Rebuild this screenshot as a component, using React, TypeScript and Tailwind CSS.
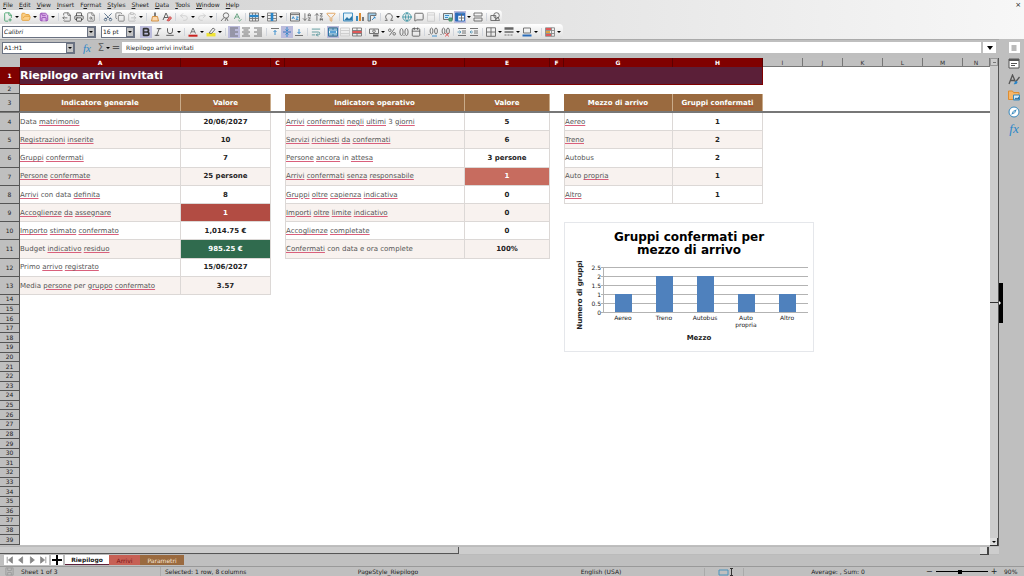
import React from 'react';
import {
  ArrowDownAZ, ArrowUpZA, BarChart3, Bold, Brush, Calendar, ClipboardPaste, Copy, Eraser,
  FileOutput, FilePlus2, FileSearch, FolderOpen, Funnel, Globe, Heading, Image,
  Italic, MessageSquare, Omega, Printer, Redo2, Save, Scissors, Search,
  Shapes, SpellCheck, Underline, Undo2, WrapText,
} from 'lucide-react';

const COLS =
  'grid grid-cols-[20px_161px_90px_14px_180px_85px_14px_109px_90px_repeat(5,40px)_1fr]';

const CORRECT = ['Data', 'con', 'data', 'in', '3', 'Budget', 'Primo', 'Media', 'per', 'Autobus', 'Auto', 'di', 'complete', 'e', 'ora'];

type Tool = { kind: 'icon'; name: string; icon: React.ReactNode; active?: boolean } | { kind: 'more' } | { kind: 'sep' };

const more: Tool = { kind: 'more' };
const sep: Tool = { kind: 'sep' };
const tool = (name: string, icon: React.ReactNode, active = false): Tool => ({ kind: 'icon', name, icon, active });

const Glyph = ({ children }: { children: React.ReactNode }) => (
  <svg viewBox="0 0 10 10" className="size-[10px]" fill="none" stroke="#666" strokeWidth="0.9">
    {children}
  </svg>
);

const lines = (rows: number[][]) => (
  <Glyph>
    {rows.map(([y, x1, x2]) => (
      <path key={y} d={`M${x1} ${y}H${x2}`} />
    ))}
  </Glyph>
);

const standardTools: Tool[] = [
  tool('New', <FilePlus2 size={10} color="#3f9f68" />), more,
  tool('Open', <FolderOpen size={10} color="#e39a2d" fill="#fbd08a" />), more,
  tool('Save', <Save size={10} color="#8d3fae" fill="#dcb4ea" />), more, sep,
  tool('Export as PDF', <FileOutput size={10} color="#666" />),
  tool('Print', <Printer size={10} color="#444" />),
  tool('Print preview', <FileSearch size={10} color="#777" />), sep,
  tool('Cut', <Scissors size={10} color="#4a6480" className="-rotate-90" />),
  tool('Copy', <Copy size={10} color="#777" />),
  tool('Paste', <ClipboardPaste size={10} color="#bbb" />), more, sep,
  tool('Clone formatting', <Glyph><path d="M5 .5v3.500" stroke="#555" strokeWidth="1.500" /><path d="M2.500 4.500h5l1 4.500h-7z" fill="#fbd9b0" stroke="#d08a38" /></Glyph>),
  tool('Clear formatting', <Glyph><path d="M1 8L4 1l3 6M2 5.500h4" stroke="#555" /><path d="M5 8.500l3-4 1.500 1.500-2.500 3z" fill="#e47878" stroke="#cc4b4b" /></Glyph>), sep,
  tool('Undo', <Undo2 size={10} color="#ccc" />), more,
  tool('Redo', <Redo2 size={10} color="#ccc" />), more, sep,
  tool('Find', <Glyph><circle cx="6" cy="3.500" r="2.700" /><path d="M4 5.500L1 9M5 9l1.500-3L8 9" /></Glyph>),
  tool('Spelling', <SpellCheck size={10} color="#5d9c78" />), sep,
  tool('Row', <Glyph><path d="M.5 1h9v8h-9zM.5 6.500h9M3.500 1v8M6.500 1v8" stroke="#777" /><path d="M.5 4h9" stroke="#2b86c9" strokeWidth="2.400" /></Glyph>), more,
  tool('Column', <Glyph><path d="M.5 1h9v8h-9zM.5 3.500h9M.5 6.500h9" stroke="#777" /><path d="M5 1v8" stroke="#2b86c9" strokeWidth="2.600" /></Glyph>), more, sep,
  tool('Sort', <Glyph><path d="M.5 1h9v8h-9z" /><path d="M.5 2.600h9" /><path d="M2 7l1.200-2.400L4.400 7M6 5h2.400L6 7.400h2.400" stroke="#2b86c9" /></Glyph>),
  tool('Sort ascending', <ArrowDownAZ size={10} color="#666" />),
  tool('Sort descending', <ArrowUpZA size={10} color="#666" />),
  tool('AutoFilter', <Funnel size={10} color="#e09a4d" />), sep,
  tool('Image', <Glyph><path d="M.5 1h9v8h-9z" fill="#e4f3fa" stroke="#3788bd" /><path d="M1 8.500l3-3.500 2 2 3-3v4.500z" fill="#2b78a9" stroke="none" /></Glyph>),
  tool('Chart', <Glyph><path d="M2 9V4" stroke="#3788bd" strokeWidth="2" /><path d="M5 9V1" stroke="#dd8d33" strokeWidth="2" /><path d="M8 9V5" stroke="#777" strokeWidth="2" /></Glyph>),
  tool('Pivot table', <Glyph><path d="M1 1h8v2.500H3.500V9H1z" fill="#9fcce8" /><path d="M5 8l3-3M6.500 5H8v1.500" stroke="#2b86c9" /></Glyph>), sep,
  tool('Special character', <Omega size={10} color="#555" />), more,
  tool('Hyperlink', <Globe size={10} color="#3b93a2" />),
  tool('Comment', <MessageSquare size={10} color="#555" />),
  tool('Headers and footers', <Glyph><path d="M1.500 .8h7v8.500h-7zM1.500 3h7" stroke="#ccc" /></Glyph>), sep,
  tool('Define print area', <Glyph><path d="M.5 1.500h9v6h-9z" fill="#cde9f4" /><path d="M2 3.500h4M2 5.500h3" stroke="#2b86c9" /><path d="M6 6h3v3H6z" fill="#5fae80" stroke="#4c8d68" /></Glyph>),
  tool('Freeze rows and columns', <Glyph><path d="M.5 1h9v8h-9z" fill="#fff" stroke="#2b6cb9" /><path d="M.5 2.500h9M2 1v8" stroke="#2b6cb9" strokeWidth="2.500" /><path d="M4 6h5.500M6.500 2v7" /></Glyph>, true), more,
  tool('Split window', <Glyph><path d="M1 1h8v3H1zM1 6h8v3H1z" /></Glyph>), sep,
  tool('Draw functions', <Glyph><circle cx="6.500" cy="3.500" r="2.800" /><path d="M.8 3.500h5v5h-5zM5 8.500L8 5l1.500 3.500z" /></Glyph>),
];

const formatTools: Tool[] = [
  tool('Bold', <Bold size={10} color="#333" strokeWidth={4} />, true),
  tool('Italic', <Italic size={10} color="#444" />),
  tool('Underline', <Underline size={10} color="#444" />), more, sep,
  tool('Font color', <Glyph><path d="M2.500 6.500L5 1l2.500 5.500M3.300 4.800h3.400" /><path d="M.5 8.700h9" stroke="#c9211e" strokeWidth="2" /></Glyph>), more,
  tool('Highlighting', <Glyph><path d="M.5 7.700h9" stroke="#f0e436" strokeWidth="3.500" /><path d="M3 6l4-5 2 1.500L5.500 6.500z" /></Glyph>), more, sep,
  tool('Align left', lines([[1, 1, 9], [3, 1, 6], [5, 1, 9], [7, 1, 6], [9, 1, 9]]), true),
  tool('Align center', lines([[1, 1, 9], [3, 2.5, 7.5], [5, 1, 9], [7, 2.5, 7.5], [9, 1, 9]])),
  tool('Align right', lines([[1, 1, 9], [3, 4, 9], [5, 1, 9], [7, 4, 9], [9, 1, 9]])), sep,
  tool('Align top', <Glyph><path d="M1 1.500h8" /><path d="M5 8V3.500M3.500 5L5 3.500 6.500 5" stroke="#2b86c9" /></Glyph>),
  tool('Center vertically', <Glyph><path d="M1 5h8" stroke="#2b6cb9" /><path d="M5 0v4M3.500 2.500L5 4l1.500-1.500M5 10V6M3.500 7.500L5 6l1.500 1.500" stroke="#2b86c9" /></Glyph>, true),
  tool('Align bottom', <Glyph><path d="M1 8.500h8" /><path d="M5 2v4.500M3.500 5L5 6.500 6.500 5" stroke="#2b86c9" /></Glyph>), sep,
  tool('Wrap text', <WrapText size={10} color="#4b8f94" />), sep,
  tool('Merge and center', <Glyph><path d="M.5 1h9v8h-9z" fill="#e4f3fa" /><path d="M.5 1h9v8h-9zM.5 3h9M.5 7h9M5 1v2M5 7v2" stroke="#2b78a9" /><path d="M2 5h6" stroke="#2b86c9" strokeWidth="1.500" /></Glyph>, true),
  tool('Merge cells', <Glyph><path d="M.5 1h9v8h-9zM.5 3.500h9M.5 6.500h9" stroke="#ccc" /></Glyph>),
  tool('Unmerge cells', <Glyph><path d="M.5 1h9v8h-9zM.5 3.500h9M.5 6.500h9M5 1v8" stroke="#777" /><path d="M.5 5h9" stroke="#df5858" strokeWidth="2" /></Glyph>), sep,
  tool('Currency', <Glyph><path d="M.5 2h9v4.500h-9z" /><circle cx="5" cy="4.200" r="1.300" /><path d="M4 8.500h5.500" strokeWidth="2" /></Glyph>), more,
  tool('Percent', <Glyph><circle cx="2.800" cy="3.200" r="1.300" /><circle cx="7.200" cy="6.800" r="1.300" /><path d="M7.500 1.500l-5 7" /></Glyph>),
  tool('Number', <Glyph><ellipse cx="2.500" cy="5" rx="1.600" ry="3.500" /><ellipse cx="7.500" cy="5" rx="1.600" ry="3.500" /><path d="M5 8v1" /></Glyph>),
  tool('Date', <Calendar size={10} color="#555" />), sep,
  tool('Add decimal', <Glyph><ellipse cx="3.500" cy="4" rx="1.400" ry="3" /><ellipse cx="8" cy="4" rx="1.400" ry="3" /><path d="M1 7v1" /><path d="M4 9h5" stroke="#2b86c9" /></Glyph>),
  tool('Delete decimal', <Glyph><ellipse cx="3.500" cy="4" rx="1.400" ry="3" /><ellipse cx="8" cy="4" rx="1.400" ry="3" /><path d="M1 7v1" /><path d="M5 6l4 3.500M9 6L5 9.500" stroke="#df5858" /></Glyph>), sep,
  tool('Increase indent', <Glyph><path d="M1 1.500h8M5 4h4M5 6h4M1 8.500h8" /><path d="M.5 5h3M2.500 3.500L4 5 2.500 6.500" stroke="#5b9ab9" /></Glyph>),
  tool('Decrease indent', <Glyph><path d="M1 1.500h8M5 4h4M5 6h4M1 8.500h8" /><path d="M1 5h3M2.500 3.500L1 5l1.500 1.500" stroke="#5b9ab9" /></Glyph>), sep,
  tool('Borders', <Glyph><path d="M.5 .8h9v8.500h-9zM5 .8v8.500M.5 5h9" /></Glyph>), more,
  tool('Border style', <Glyph><path d="M.5 1.500h9" strokeWidth="2.500" /><path d="M.5 5h9" strokeWidth="1.500" /><path d="M.5 8h9" strokeDasharray="2 1" /></Glyph>), more,
  tool('Border color', <Glyph><path d="M1.500 1h7v5h-7z" /><path d="M.5 8.500h9" stroke="#2b6cb9" strokeWidth="2" /></Glyph>), more, sep,
  tool('Conditional', <Glyph><path d="M.5 .8h9v8.500h-9zM.5 3.500h9M.5 6.500h9M6.500 .8v8.500" stroke="#888" /><path d="M1 2h5M1 8h5" stroke="#df5858" strokeWidth="2" /><path d="M1 5h4" stroke="#e0a23c" strokeWidth="2" /></Glyph>), more,
];

const rows: string[][] = [
  ['Data matrimonio', '20/06/2027', 'Arrivi confermati negli ultimi 3 giorni', '5', 'Aereo', '1'],
  ['Registrazioni inserite', '10', 'Servizi richiesti da confermati', '6', 'Treno', '2'],
  ['Gruppi confermati', '7', 'Persone ancora in attesa', '3 persone', 'Autobus', '2'],
  ['Persone confermate', '25 persone', 'Arrivi confermati senza responsabile', '1', 'Auto propria', '1'],
  ['Arrivi con data definita', '8', 'Gruppi oltre capienza indicativa', '0', 'Altro', '1'],
  ['Accoglienze da assegnare', '1', 'Importi oltre limite indicativo', '0'],
  ['Importo stimato confermato', '1,014.75 €', 'Accoglienze completate', '0'],
  ['Budget indicativo residuo', '985.25 €', 'Confermati con data e ora complete', '100%'],
  ['Primo arrivo registrato', '15/06/2027'],
  ['Media persone per gruppo confermato', '3.57'],
];

const chartData = [
  { label: 'Aereo', value: 1 },
  { label: 'Treno', value: 2 },
  { label: 'Autobus', value: 2 },
  { label: 'Auto propria', value: 1 },
  { label: 'Altro', value: 1 },
];

const Caret = () => <span className="border-x-2 border-t-2 border-x-transparent border-t-black" />;

const Spelled = ({ text, header = false }: { text: string; header?: boolean }) => (
  <>
    {text.split(' ').map((word, i) => (
      <React.Fragment key={i}>
        {i > 0 && ' '}
        <span
          className={
            CORRECT.includes(word)
              ? ''
              : `underline decoration-1 underline-offset-1 ${header ? 'decoration-[#b5502f]' : 'decoration-[#d9607c]'}`
          }
        >
          {word}
        </span>
      </React.Fragment>
    ))}
  </>
);

const Toolbar = ({ tools }: { tools: Tool[] }) => (
  <div className="flex h-full items-center">
    {tools.map((t, i) => {
      if (t.kind === 'more') {
        return <span key={i} className="flex w-[6px] justify-center"><Caret /></span>;
      }
      if (t.kind === 'sep') {
        return <span key={i} className="flex w-[5px] justify-center"><span className="h-2 w-px bg-gray-300" /></span>;
      }
      return (
        <button
          key={i}
          aria-label={t.name}
          className={`flex h-[12px] w-[12px] items-center justify-center ${t.active ? 'bg-[#bcbcdc]' : ''}`}
        >
          {t.icon}
        </button>
      );
    })}
  </div>
);

const DropButton = () => (
  <span className="flex w-[8px] items-center justify-center border border-gray-500 bg-[#c4c4c4]"><Caret /></span>
);

const Combo = ({ label, value, className }: { label: string; value: string; className: string }) => (
  <div className={`flex h-[12px] border border-gray-500 bg-white ${className}`}>
    <select aria-label={label} className="min-w-0 flex-1 appearance-none px-px text-[6px] leading-[10px] outline-none">
      <option>{value}</option>
    </select>
    <DropButton />
  </div>
);

const valueColor = (value: string, row: number, col: number) => {
  if (col === 1 && row === 5) return 'bg-[#b24c43] text-white';
  if (col === 1 && row === 7) return 'bg-[#306b4e] text-white';
  if (col === 3 && row === 3) return 'bg-[#c76c5f] text-white';
  return value && row % 2 === 1 ? 'bg-[#f8f2ef]' : '';
};

const rowHead = 'flex items-center justify-center border-b border-r border-[#555] bg-[#bfbfbf] text-[6px] font-normal';

const Sheet = () => (
  <table className="block h-[487px] bg-white">
    <thead className="block">
      <tr className={`${COLS} h-[9px] bg-[#c0c0c0] text-[6px] leading-[9px]`}>
        <td />
        {'ABCDEFGHIJKLMN'.split('').map((c, i) => (
          <th
            key={c}
            className={`overflow-hidden ${i < 8 ? 'border-r border-[#5c0000] bg-[#800000] font-bold text-white' : 'border-r border-b border-[#777] font-normal text-[#333]'}`}
          >
            {c}
          </th>
        ))}
      </tr>
    </thead>
    <tbody className="block">
      <tr className={`${COLS} h-[17px]`}>
        <th className="flex items-center justify-center border-r border-[#5c0000] bg-[#800000] text-[6px] text-white">1</th>
        <td colSpan={8} className="col-span-8 border-r border-[#800000] bg-[#5b1f38] pt-px text-[11px] leading-[16px] font-bold text-white">
          Riepilogo arrivi invitati
        </td>
      </tr>
      <tr className={`${COLS} h-[10px]`}>
        <th className={rowHead}>2</th>
        <td colSpan={8} className="col-span-8 border-t border-[#800000]" />
      </tr>
      <tr className={`${COLS} h-[19px] border-b border-[#777]`}>
        <th className={rowHead}>3</th>
        {['Indicatore generale', 'Valore', '', 'Indicatore operativo', 'Valore', '', 'Mezzo di arrivo', 'Gruppi confermati'].map((h, i) =>
          h ? (
            <th key={i} className="flex items-center justify-center border-r border-[#c9ab8a] bg-[#9a6a3f] text-[7px] font-bold text-white">
              <span><Spelled text={h} header /></span>
            </th>
          ) : (
            <td key={i} />
          ),
        )}
      </tr>
    </tbody>
    <tbody className="grid h-[182px] grid-rows-[repeat(10,1fr)]">
      {rows.map((cells, r) => (
        <tr key={r} className={COLS}>
          <th className={rowHead}>{r + 4}</th>
          {[0, 1, -1, 2, 3, -1, 4, 5].map((c, i) => {
            const text = cells[c];
            if (!text) return <td key={i} />;
            return (
              <td
                key={i}
                className={`flex items-center border-r border-b border-[#dcd8d6] pt-px text-[7px] whitespace-nowrap ${valueColor(text, r, c)} ${c % 2 ? 'justify-center font-bold' : 'text-[#555]'} ${c === 2 || c === 4 ? 'border-l' : ''}`}
              >
                {c % 2 ? text : <span><Spelled text={text} /></span>}
              </td>
            );
          })}
        </tr>
      ))}
    </tbody>
    <tbody className="grid h-[250px] grid-rows-[repeat(26,1fr)]">
      {Array.from({ length: 26 }, (_, i) => (
        <tr key={i} className={`${COLS} min-h-0`}>
          <th className={`${rowHead} min-h-0 leading-[8px]`}>{i + 14}</th>
        </tr>
      ))}
    </tbody>
  </table>
);

const Chart = () => (
  <figure className="absolute top-[164px] left-[564px] h-[130px] w-[250px] border border-gray-200 bg-white text-black">
    <figcaption className="mt-[8px] text-center text-[12px] leading-[13px] font-bold">
      Gruppi confermati per
      <br />
      mezzo di arrivo
    </figcaption>
    <svg viewBox="0 0 248 94" className="h-[94px] w-[248px]" fontFamily="DejaVu Sans" fontSize="6" fill="#222">
      {[2.5, 2, 1.5, 1, 0.5, 0].map((tick, i) => (
        <g key={tick}>
          <path d={`M36 ${10.5 + i * 9}H243`} stroke="#b3b3b3" />
          <text x="36" y={12.5 + i * 9} textAnchor="end">{tick}</text>
        </g>
      ))}
      <path d="M38.500 10v46" stroke="#b3b3b3" />
      {chartData.map(({ label, value }, i) => (
        <g key={label} textAnchor="middle">
          <rect x={50 + i * 41} y={55 - value * 18} width="17" height={value * 18} fill="#4f81bd" />
          {label.split(' ').map((word, line) => (
            <text key={word} x={58 + i * 41} y={63 + line * 7}>{word}</text>
          ))}
        </g>
      ))}
      <text x="134" y="83" textAnchor="middle" fontSize="7" fontWeight="bold">Mezzo</text>
      <text transform="translate(17 38) rotate(-90)" textAnchor="middle" fontSize="7" fontWeight="bold">Numero di gruppi</text>
    </svg>
  </figure>
);

const Sidebar = () => (
  <aside className="flex w-[24px] flex-col items-center gap-[5px] bg-[#bfbfbf] pt-[3px] pl-[4px]">
    <button aria-label="Sidebar settings" className="flex size-[11px] items-center justify-center bg-white">
      <Glyph><path d="M2.500 3h5M2.500 5h5M2.500 7h5" /></Glyph>
    </button>
    <button aria-label="Properties">
      <svg viewBox="0 0 12 11" className="h-[11px] w-[12px]" stroke="#555">
        <path d="M1 1h10v9H1z" fill="#fff" /><path d="M1 2h10" strokeWidth="2" /><path d="M3 5.500h6M3 7.500h4" />
      </svg>
    </button>
    <button aria-label="Styles">
      <svg viewBox="0 0 12 11" className="h-[11px] w-[12px]" fill="none">
        <path d="M1 10L4.500 1 7.500 8M2.200 6.500h4" stroke="#555" strokeWidth="1.300" /><path d="M11.500 3L8 7.500" stroke="#555" strokeWidth="1.300" /><path d="M8.500 7c-2 0-1.500 2.500-3 3 2 .5 4 0 4-2z" fill="#2b86c9" />
      </svg>
    </button>
    <button aria-label="Gallery">
      <svg viewBox="0 0 12 11" className="h-[11px] w-[12px]">
        <path d="M.5 1h4l1 1.500H11V9.500H.5z" fill="#f4b66a" stroke="#df8d2f" /><path d="M5.500 5h6v5h-6z" fill="#d6ecf8" stroke="#3788bd" /><path d="M6 9.500l2-2 1 1 2-2v3z" fill="#2b6c99" />
      </svg>
    </button>
    <button aria-label="Navigator">
      <svg viewBox="0 0 12 12" className="size-[12px]">
        <circle cx="6" cy="6" r="5" fill="#fff" stroke="#3788bd" /><path d="M8.800 3.200L7 7 3.200 8.800 5 5z" fill="#3788bd" /><circle cx="6" cy="6" r=".8" fill="#fff" />
      </svg>
    </button>
    <button aria-label="Functions" className="font-['Liberation_Serif'] text-[13px] leading-[12px] text-[#2b86c9] italic">fx</button>
  </aside>
);

const App: React.FC = () => {
  const [formula, setFormula] = React.useState('Riepilogo arrivi invitati');

  return (
    <div className="flex h-screen flex-col overflow-hidden bg-[#bfbfbf] font-['DejaVu_Sans',sans-serif] text-[6px] text-[#222]">
      <header className="bg-linear-to-r from-[#cfcfcf] to-[#f7f7f7]">
        <nav className="flex h-[10px] items-center gap-[6px] pl-[3px] leading-[10px]">
          {['File', 'Edit', 'View', 'Insert', 'Format', 'Styles', 'Sheet', 'Data', 'Tools', 'Window', 'Help'].map((item) => {
            const key = item === 'Format' ? 1 : 0;
            return (
              <button key={item}>
                {item.slice(0, key)}<span className="underline">{item[key]}</span>{item.slice(key + 1)}
              </button>
            );
          })}
          <button aria-label="Close document" className="mr-[3px] ml-auto text-[7px]">×</button>
        </nav>
        <div className="flex h-[14px]">
          <div className="rounded-r-sm bg-linear-to-b from-white to-[#dedede] pr-px pl-[2px]"><Toolbar tools={standardTools} /></div>
        </div>
        <div className="flex h-[15px]">
          <div className="flex items-center rounded-r-sm bg-linear-to-b from-white to-[#dedede] pr-px pl-[2px]">
            <Combo label="Font name" value="Calibri" className="w-[94px] italic" />
            <Combo label="Font size" value="16 pt" className="mx-[5px] w-[34px]" />
            <Toolbar tools={formatTools} />
          </div>
        </div>
      </header>

      <div className="flex min-h-0 flex-1">
        <main className="flex min-w-0 flex-1 flex-col">
          <div className="flex h-[19px] items-start border-t border-[#aaa] pt-[2px] pr-[3px] pl-[2px]">
            <Combo label="Name box" value="A1:H1" className="w-[73px]" />
            <button aria-label="Function wizard" className="ml-[5px] w-[14px] font-['Liberation_Serif'] text-[11px] leading-[12px] text-[#2b86c9] italic">fx</button>
            <button aria-label="Select function" className="flex w-[16px] items-center justify-end gap-[2px] text-[10px] leading-[12px] text-[#666]">Σ<Caret /></button>
            <button aria-label="Formula" className="w-[12px] text-[10px] leading-[12px] text-[#555]">=</button>
            <input
              aria-label="Input line"
              value={formula}
              onChange={(e) => setFormula(e.target.value)}
              className="h-[11px] min-w-0 flex-1 bg-white px-[4px] text-[6px] outline-none"
            />
            <button aria-label="Expand formula bar" className="ml-[2px] flex h-[11px] w-[13px] items-center justify-center bg-white">
              <span className="border-x-3 border-t-4 border-x-transparent border-t-black" />
            </button>
          </div>

          <div className="flex min-h-0 flex-1">
            <div className="relative min-w-0 flex-1 overflow-hidden">
              <Sheet />
              <span className="absolute top-[53px] right-0 left-[20px] h-px bg-[#777]" />
              <Chart />
            </div>
            <div className="flex w-[9px] flex-col justify-between border-r border-[#555] bg-[#cdcdcd]">
              <span className="flex h-[8px] items-center justify-center border border-[#999]"><span className="h-px w-[3px] bg-[#777]" /></span>
              <span className="h-px bg-[#333]" />
              <span className="flex h-[8px] items-center justify-center border-r border-b border-[#333] bg-[#ddd]"><Caret /></span>
            </div>
          </div>

          <div className="flex h-[9px] items-center justify-between border-y border-[#bbb] bg-[#cdcdcd]">
            <span className="h-full w-[459px] border-r border-b border-[#555]" />
            <span className="mr-[10px] h-[8px] w-[9px] border-r-2 border-b border-[#444] bg-[#ddd]" />
          </div>

          <div className="mb-px flex h-[10px] items-stretch pl-[4px] text-[6px] leading-[9px]">
            <div className="flex w-[45px] items-center justify-between bg-white px-[2px]">
              {['M1.500 1v8M8 1L3 5l5 4z', 'M7 1L2 5l5 4z', 'M3 1l5 4-5 4z', 'M8.500 1v8M2 1l5 4-5 4z'].map((d, i) => (
                <button key={i} aria-label={['First sheet', 'Previous sheet', 'Next sheet', 'Last sheet'][i]}>
                  <svg viewBox="0 0 10 10" className="size-[8px]" fill="#888" stroke="#888"><path d={d} /></svg>
                </button>
              ))}
            </div>
            <button aria-label="Add sheet" className="mx-[2px] flex w-[12px] items-center justify-center bg-white">
              <svg viewBox="0 0 10 10" className="size-[10px]" stroke="#000" strokeWidth="2"><path d="M5 0v10M0 5h10" /></svg>
            </button>
            <button className="w-[44px] border-b border-[#5b1f38] bg-white font-bold">Riepilogo</button>
            <button className="w-[31px] bg-[#c76055] text-[#7a1515]">Arrivi</button>
            <button className="w-[44px] bg-[#9a6a3f] text-[#f4e4d4]">Parametri</button>
          </div>
        </main>

        <div className="flex w-px items-center">
          <button aria-label="Hide sidebar" className="z-10 flex h-[40px] w-[4px] shrink-0 items-center bg-black">
            <span className="border-y-2 border-l-2 border-y-transparent border-l-white" />
          </button>
        </div>
        <Sidebar />
      </div>

      <footer className="flex h-[10px] items-center border-t border-[#999] text-[6px] leading-[9px]">
        <span className="flex w-[160px] items-center gap-[7px] pl-[5px]">
          <svg viewBox="0 0 10 10" className="size-[9px]" fill="none" stroke="#999"><path d="M1 1h8v8H1zM3 1v3h4V1M3 9V6h4v3" /></svg>
          Sheet 1 of 3
        </span>
        <span className="w-[150px] border-l border-[#aaa] pl-[4px]">Selected: 1 row, 8 columns</span>
        <span className="w-[156px] text-center">PageStyle_Riepilogo</span>
        <span className="flex-1 pl-[32px] text-center">English (USA)</span>
        <span className="flex w-[40px] items-center justify-center border-x border-[#aaa] pl-[4px]">
          <svg viewBox="0 0 16 8" className="h-[8px] w-[16px]" fill="none"><path d="M1 2h9v5H1z" stroke="#4b93bd" /><path d="M12 .5h3M12 7.500h3M13.500 .5v7" stroke="#333" /></svg>
        </span>
        <span className="w-[182px] pl-[6px] text-center">Average: , Sum: 0</span>
        <span className="flex w-[78px] items-center gap-[3px] text-[8px]">
          −
          <input type="range" aria-label="Zoom" defaultValue={47} className="h-px w-[52px] appearance-none bg-black [&::-webkit-slider-thumb]:size-[4px] [&::-webkit-slider-thumb]:appearance-none [&::-webkit-slider-thumb]:bg-black" />
          +
        </span>
        <span className="w-[20px]">90%</span>
      </footer>
    </div>
  );
};

export default App;
